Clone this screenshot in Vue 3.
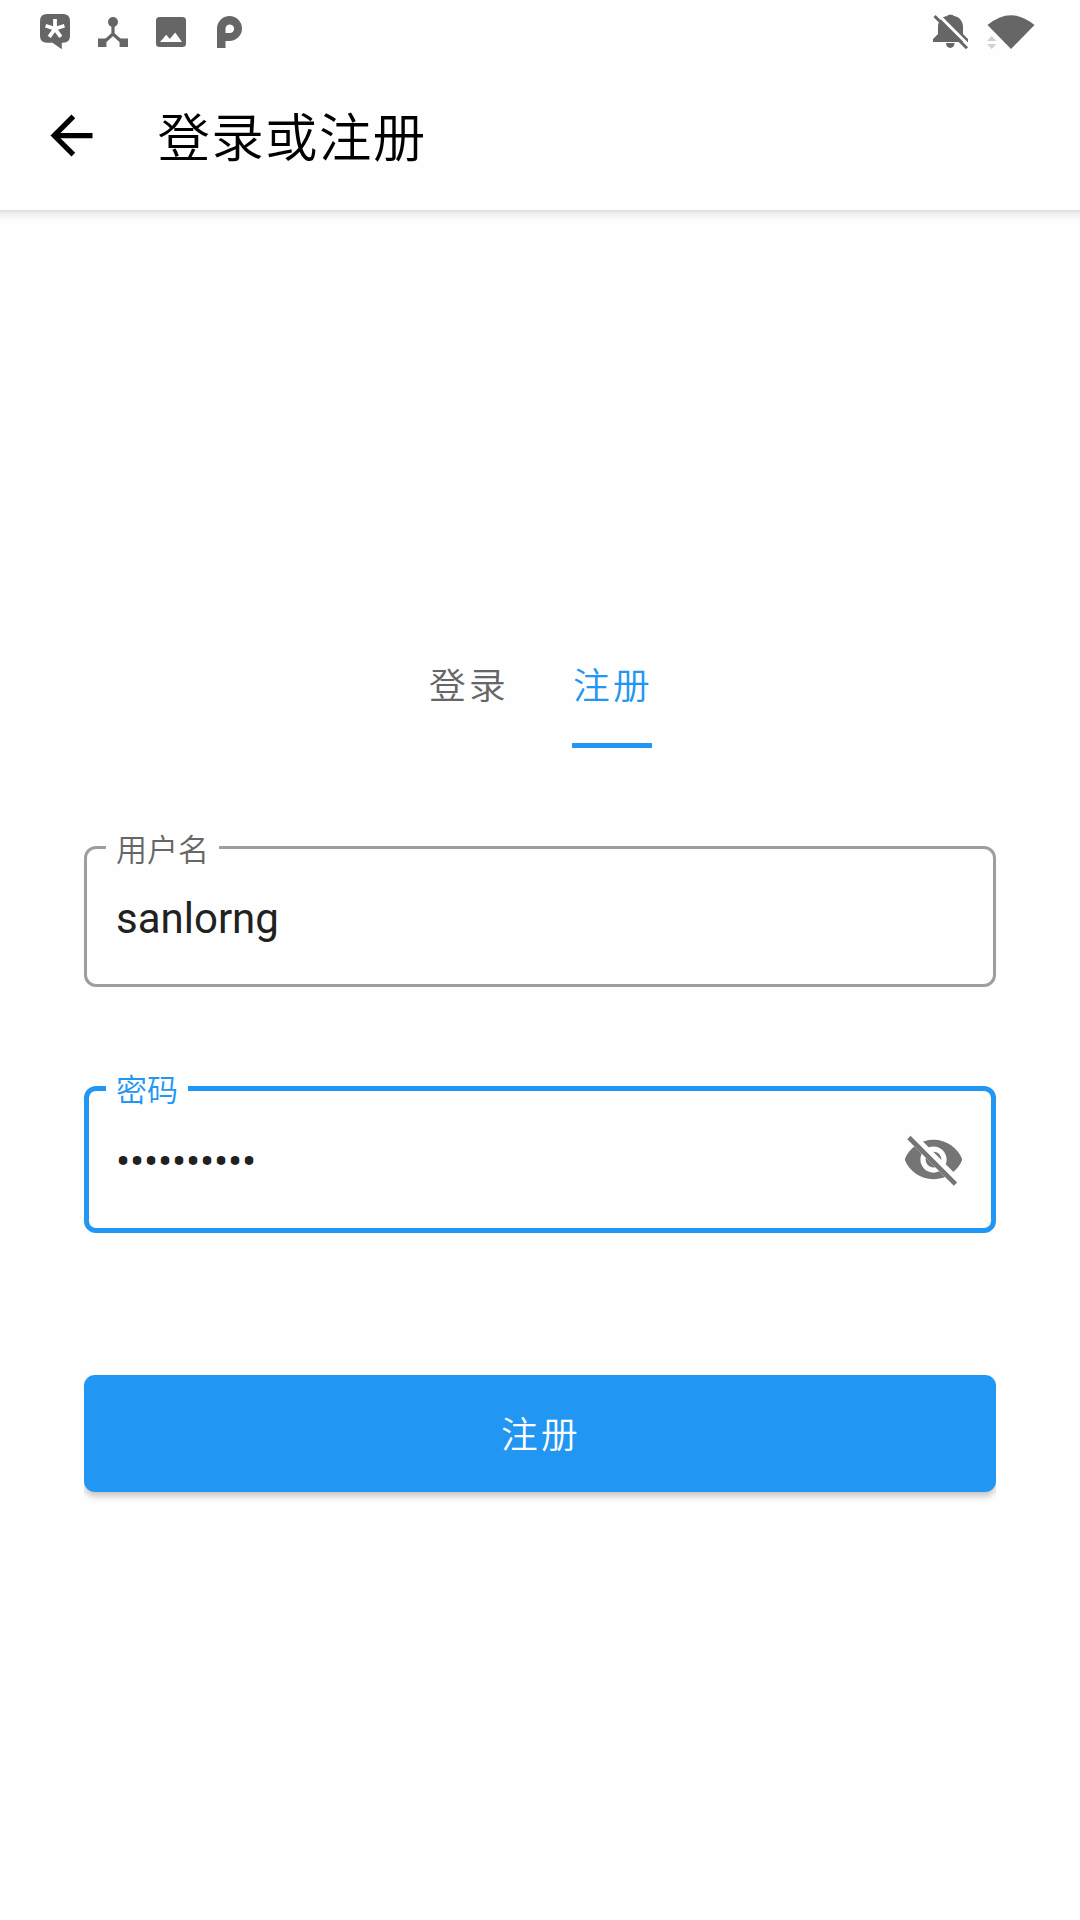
<script setup>
import { ref } from 'vue'

const tabs = ['登录', '注册']
const active = ref(1)
const username = 'sanlorng'
const masked = '•'.repeat(10)
</script>

<template>
  <div class="screen">
    <header class="appbar">
      <div class="status">
        <div class="group left">
          <svg width="30" height="36" viewBox="0 0 30 36">
            <path fill="#666" d="M7 0H23Q30 0 30 7V22Q30 28.5 23 28.7L21.8 28.8V35.2L12.5 28.7H7Q0 28.7 0 22V7Q0 0 7 0Z" />
            <path stroke="#fff" stroke-width="3.8" fill="none" d="M15 14.8V5M15 14.8L5.6 11.8M15 14.8L24.4 11.8M15 14.8L9.2 22.8M15 14.8L20.8 22.8" />
          </svg>
          <svg width="30" height="30" viewBox="0 0 30 30">
            <circle cx="15" cy="5" r="5" fill="#666" />
            <path fill="none" stroke="#666" stroke-width="3.2" d="M15 8V17L5 26M15 17L25 26" />
            <path fill="#666" d="M0 21.6H8.4V30H0ZM21.6 21.6H30V30H21.6Z" />
          </svg>
          <svg width="30" height="30" viewBox="0 0 30 30">
            <path fill="#666" fill-rule="evenodd" d="M3.5 0H26.500Q30 0 30 3.500V26.500Q30 30 26.500 30H3.500Q0 30 0 26.500V3.500Q0 0 3.500 0ZM4 25H26L19.200 15.400L13.800 22L10.200 17.700Z" />
          </svg>
          <svg width="25" height="32" viewBox="0 0 25 32">
            <path fill="#666" fill-rule="evenodd" d="M0 32V12.500A12.500 12.500 0 1 1 12.500 25H8.500V32ZM8.500 17H12.500A4.300 4.300 0 1 0 8.500 12.500Z" />
          </svg>
        </div>
        <div class="group right">
          <svg width="36" height="36" viewBox="0 0 36 36">
            <path fill="#666" d="M0 28V25L5 20V13C5 7 8.500 3 14 2C15 .4 20 .4 21 2C26.500 3 30 7 30 13V20L35 25V28ZM13 29H21.500C21.500 35.500 13 35.500 13 29Z" />
            <path stroke="#fff" stroke-width="3" d="M4 -.5L36 31.500" />
            <path stroke="#666" stroke-width="3" d="M1.500 2L34 34.200" />
          </svg>
          <svg width="48" height="36" viewBox="0 0 48 36">
            <path fill="#666" d="M.5 11Q24 -8.500 47.500 11L24 35Z" />
            <path fill="#d0d0d0" d="M0 27L4.700 22L9.400 27ZM0 30H9.400L4.700 35Z" />
          </svg>
        </div>
      </div>
      <div class="toolbar">
        <svg class="back" width="63" height="63" viewBox="0 0 24 24">
          <path d="M20 11H7.830l5.590-5.590L12 4l-8 8 8 8 1.410-1.410L7.830 13H20v-2z" />
        </svg>
        <h1>登录或注册</h1>
      </div>
    </header>

    <main>
      <nav class="tabs">
        <button v-for="(t, i) in tabs" :key="t" class="tab" :class="{ active: i === active }" @click="active = i">
          <span>{{ t }}</span>
        </button>
      </nav>

      <div class="field">
        <label class="label user">用户名</label>
        <span class="value">{{ username }}</span>
      </div>

      <div class="field focused">
        <label class="label pass">密码</label>
        <span class="value dots">{{ masked }}</span>
        <svg class="eye" width="63" height="63" viewBox="0 0 24 24">
          <clipPath id="cut">
            <path d="M2 4.270L19.730 22L22.270 19.460L4.540 1.730V1H23V23H1V4.270Z" />
          </clipPath>
          <path clip-path="url(#cut)" fill="#757575" d="M12 4.500C7 4.500 2.730 7.610 1 12c1.730 4.390 6 7.500 11 7.500s9.270-3.110 11-7.500c-1.730-4.390-6-7.500-11-7.500zM12 17c-2.760 0-5-2.240-5-5s2.240-5 5-5 5 2.240 5 5-2.240 5-5 5zm0-8c-1.660 0-3 1.340-3 3s1.340 3 3 3 3-1.340 3-3-1.340-3-3-3z" />
          <path d="M3.270 4.270L19.740 20.740" fill="none" stroke="#757575" stroke-width="1.800" stroke-linecap="square" stroke-miterlimit="10" />
        </svg>
      </div>

      <button class="submit">注册</button>
    </main>
  </div>
</template>

<style>
body {
  margin: 0;
  background: #fefefe;
}
</style>

<style scoped>
.screen {
  width: 1080px;
  height: 1920px;
  overflow: hidden;
  background: #fefefe;
  font-family: Roboto, "Noto Sans CJK SC", sans-serif;
}
svg {
  display: block;
  flex: none;
}
button {
  border: 0;
  padding: 0;
  background: none;
  font-family: inherit;
}
.appbar {
  position: relative;
  height: 210px;
}
.appbar::after {
  content: "";
  position: absolute;
  left: 0;
  right: 0;
  top: 100%;
  height: 12px;
  background: linear-gradient(rgba(0, 0, 0, 0.13), rgba(0, 0, 0, 0.06) 30%, rgba(0, 0, 0, 0.02) 65%, transparent);
}
.status {
  height: 63px;
  display: flex;
  justify-content: space-between;
  box-sizing: border-box;
  padding: 14px 45px 0 40px;
}
.group {
  display: flex;
}
.left {
  gap: 28px;
}
.left svg:nth-child(2),
.left svg:nth-child(3) {
  margin-top: 2.500px;
}
.left svg:nth-child(4) {
  margin: 2px 0 0 2.500px;
}
.right {
  gap: 18px;
}
.right svg:last-child {
  margin-top: -0.500px;
}
.toolbar {
  height: 147px;
  display: flex;
  align-items: center;
  padding-left: 39.500px;
}
.back {
  margin-top: -1.500px;
}
h1 {
  margin: 4px 0 0 55px;
  font-size: 52.500px;
  font-weight: 350;
  line-height: 76px;
  letter-spacing: 1.300px;
  color: #000;
}
main {
  padding: 0 84px;
}
.tabs {
  display: flex;
  justify-content: center;
  padding-top: 412px;
  height: 126px;
}
.tab {
  height: 126px;
  padding: 0 32px;
  color: #666;
  font-size: 36.750px;
  font-weight: 350;
  letter-spacing: 3.280px;
}
.tab span {
  display: block;
  width: 80px;
  height: 121px;
  line-height: 130px;
  text-align: left;
  text-indent: 1px;
  white-space: nowrap;
  border-bottom: 5px solid transparent;
}
.tab.active {
  color: #2196f3;
}
.tab.active span {
  border-color: #2196f3;
}
.field {
  position: relative;
  box-sizing: border-box;
  height: 141px;
  margin-top: 98px;
  border: 3px solid #9e9e9e;
  border-radius: 12px;
  padding: 0 29px;
  display: flex;
  align-items: center;
  justify-content: space-between;
}
.focused {
  height: 147px;
  margin-top: 99px;
  border: 5px solid #2196f3;
  padding: 0 26px 0 27px;
}
.label {
  position: absolute;
  left: 19px;
  top: -16px;
  height: 36px;
  box-sizing: border-box;
  padding-left: 10px;
  background: #fefefe;
  color: #666;
  font-size: 31px;
  font-weight: 350;
  line-height: 36px;
  white-space: nowrap;
}
.user {
  width: 113px;
}
.pass {
  left: 17px;
  top: -18px;
  width: 82px;
  color: #2196f3;
}
.value {
  padding-top: 4px;
  font-size: 42px;
  line-height: 50px;
  color: #212121;
}
.dots {
  letter-spacing: -0.180px;
}
.submit {
  display: block;
  width: 912px;
  height: 117px;
  margin-top: 142px;
  padding: 2px 0 0 2px;
  border-radius: 11px;
  background: #2196f3;
  color: #fff;
  font-size: 36.750px;
  font-weight: 350;
  letter-spacing: 3.280px;
  line-height: 117px;
  box-shadow: 0 4px 7px rgba(0, 0, 0, 0.24);
  clip-path: inset(0 0 -20px 0);
}
</style>
